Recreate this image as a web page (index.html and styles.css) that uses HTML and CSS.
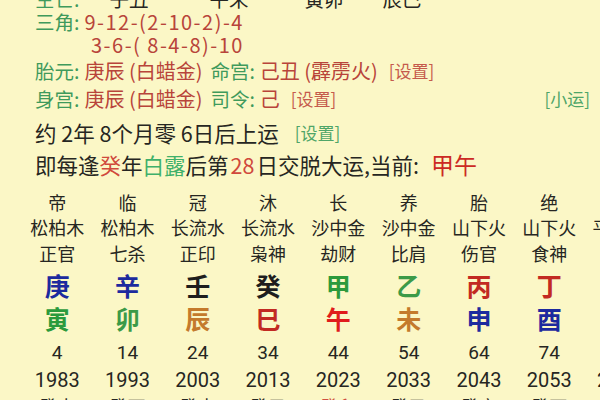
FILE: index.html
```html
<!DOCTYPE html>
<html lang="zh">
<head>
<meta charset="utf-8">
<link rel="stylesheet" href="styles.css">
</head>
<body>
<div class="page">
  <div class="info">
    <div class="row top"><span class="lab">空亡:</span><span class="k k1">子丑</span><span class="k k2">午未</span><span class="k k3">寅卯</span><span class="k k4">辰巳</span></div>
    <div class="row"><span class="lab">三角:</span><span class="val num">9-12-(2-10-2)-4</span></div>
    <div class="row indent"><span class="val num">3-6-( 8-4-8)-10</span></div>
    <div class="row gap"><span class="lab">胎元:</span><span class="val">庚辰 (白蜡金)</span><span class="lab sp">命宫:</span><span class="val">己丑 (霹雳火)</span><span class="set red sp3">[设置]</span></div>
    <div class="row gap"><span class="lab">身宫:</span><span class="val">庚辰 (白蜡金)</span><span class="lab sp">司令:</span><span class="val">己</span><span class="set red sp3">[设置]</span><span class="set green push">[小运]</span></div>
    <div class="row line first"><span class="blk">约 2年 8个月零 6日后上运</span><span class="set green sp2">[设置]</span></div>
    <div class="row line"><span class="blk">即每逢<span class="r">癸</span>年<span class="g">白露</span>后第<span class="r n28">28</span>日交脱大运,当前:</span><span class="cur">甲午</span></div>
  </div>
  <div class="grid">
    <div class="col"><div class="c1">帝</div><div class="c2">松柏木</div><div class="c3">正官</div><div class="c4 blue">庚</div><div class="c5 green">寅</div><div class="c6">4</div><div class="c7">1983</div><div class="c8">癸未</div></div>
    <div class="col"><div class="c1">临</div><div class="c2">松柏木</div><div class="c3">七杀</div><div class="c4 blue">辛</div><div class="c5 green2">卯</div><div class="c6">14</div><div class="c7">1993</div><div class="c8">癸酉</div></div>
    <div class="col"><div class="c1">冠</div><div class="c2">长流水</div><div class="c3">正印</div><div class="c4 black">壬</div><div class="c5 orange">辰</div><div class="c6">24</div><div class="c7">2003</div><div class="c8">癸未</div></div>
    <div class="col"><div class="c1">沐</div><div class="c2">长流水</div><div class="c3">枭神</div><div class="c4 black">癸</div><div class="c5 red">巳</div><div class="c6">34</div><div class="c7">2013</div><div class="c8">癸巳</div></div>
    <div class="col"><div class="c1">长</div><div class="c2">沙中金</div><div class="c3">劫财</div><div class="c4 green">甲</div><div class="c5 red2">午</div><div class="c6">44</div><div class="c7">2023</div><div class="c8 pale">癸卯</div></div>
    <div class="col"><div class="c1">养</div><div class="c2">沙中金</div><div class="c3">比肩</div><div class="c4 green2">乙</div><div class="c5 orange">未</div><div class="c6">54</div><div class="c7">2033</div><div class="c8">癸丑</div></div>
    <div class="col"><div class="c1">胎</div><div class="c2">山下火</div><div class="c3">伤官</div><div class="c4 red">丙</div><div class="c5 blue">申</div><div class="c6">64</div><div class="c7">2043</div><div class="c8">癸亥</div></div>
    <div class="col"><div class="c1">绝</div><div class="c2">山下火</div><div class="c3">食神</div><div class="c4 red">丁</div><div class="c5 blue">酉</div><div class="c6">74</div><div class="c7">2053</div><div class="c8">癸酉</div></div>
    <div class="col"><div class="c1">墓</div><div class="c2">平地木</div><div class="c3">正财</div><div class="c4 black">戊</div><div class="c5 orange">戌</div><div class="c6">84</div><div class="c7">2063</div><div class="c8">癸未</div></div>
  </div>
</div>
</body>
</html>
```

FILE: styles.css
```css
html, body {
  margin: 0;
  padding: 0;
}
body {
  width: 600px;
  height: 400px;
  overflow: hidden;
  background: #fbf7c6;
  font-family: "Noto Sans CJK SC", "Noto Sans", sans-serif;
  color: #262622;
}
.page {
  width: 600px;
  height: 400px;
  overflow: hidden;
}
.info {
  padding-left: 35px;
  padding-right: 10px;
  font-size: 19.5px;
}
.row {
  display: flex;
  align-items: center;
  height: 23px;
  white-space: nowrap;
}
.row.top {
  margin-top: -13px;
  height: 23px;
}
.k { color: #262622; }
.k1 { margin-left: 30px; }
.k2 { margin-left: 61px; }
.k3 { margin-left: 56px; }
.k4 { margin-left: 39px; }
.indent { padding-left: 51px; }
.row.gap { height: 28px; }
.lab { color: #3f9a5c; }
.val { color: #b8443a; margin-left: 5px; font-size: 20px; }
.val.num { letter-spacing: 1.5px; }
.sp { margin-left: 8px; }
.sp2 { margin-left: 16px; }
.sp3 { margin-left: 11px; }
.push { margin-left: auto; }
.set { font-size: 17px; }
.set.red { color: #c55a4c; }
.set.green { color: #4fa568; }
.row.line {
  height: 32px;
  font-size: 21.5px;
}
.row.line.first { margin-top: 4px; }
.blk { color: #262622; }
.r { color: #d0493c; }
.n28 { margin: 0 2px; }
.g { color: #3fb06a; }
.cur { color: #cc2a24; font-size: 23px; margin-left: 12px; }
.grid {
  display: grid;
  grid-template-columns: repeat(9, 70.3px);
  margin-left: 22px;
  margin-top: 10px;
  text-align: center;
}
.col > div { white-space: nowrap; }
.c1 { font-size: 18px; height: 25px; line-height: 25px; }
.c2 { font-size: 18px; height: 24px; line-height: 24px; }
.c3 { font-size: 18px; height: 29px; line-height: 29px; }
.c4 { font-size: 25px; font-weight: bold; height: 34px; line-height: 34px; }
.c5 { font-size: 25px; font-weight: bold; height: 33px; line-height: 33px; }
.c6 { font-size: 19px; height: 30px; line-height: 30px; margin-top: 3px; font-family: Roboto, "Noto Sans", sans-serif; }
.c7 { font-size: 20px; height: 25px; line-height: 25px; font-family: Roboto, "Noto Sans", sans-serif; }
.c8 { font-size: 18px; height: 26px; line-height: 26px; }
.pale { color: #d05040; }
.blue { color: #1c2a9e; }
.black { color: #1e1e1e; }
.green { color: #2c9a3c; }
.green2 { color: #3c9a48; }
.orange { color: #c47a2c; }
.red { color: #c22a22; }
.red2 { color: #e01c1c; }
```
